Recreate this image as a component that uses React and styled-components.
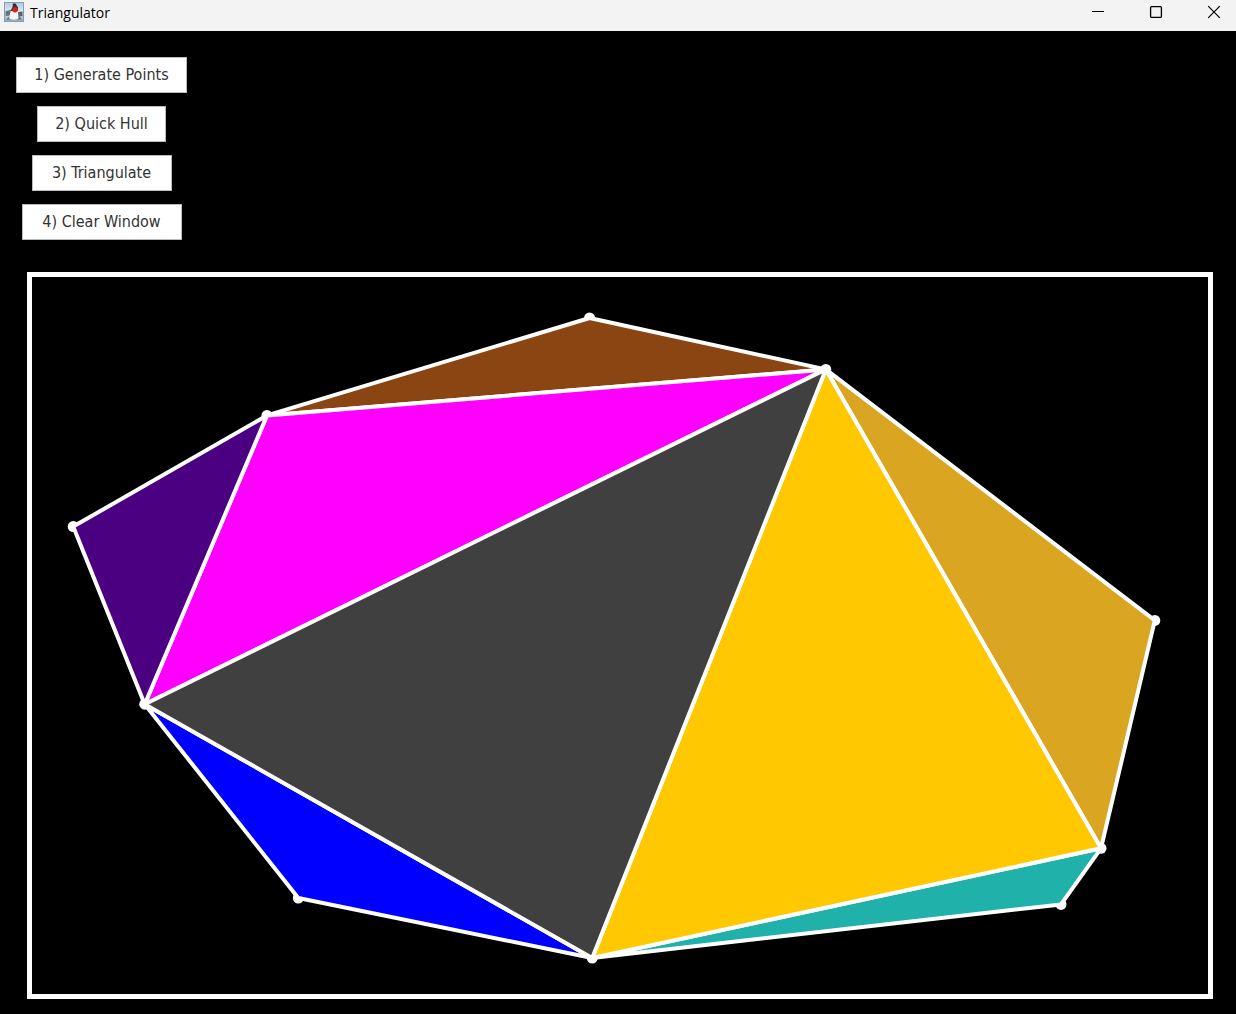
import React from "react";
import styled, { createGlobalStyle } from "styled-components";

const GlobalStyle = createGlobalStyle`
  * { box-sizing: border-box; }
  body { margin: 0; background: #000; }
`;

const AppWindow = styled.div`
  min-height: 100vh;
  display: flex;
  flex-direction: column;
  background: #000;
  font-family: "Open Sans", "Noto Sans", sans-serif;
`;

const TitleBar = styled.header`
  display: flex;
  align-items: flex-start;
  height: 31px;
  padding-left: 4px;
  background: #f3f3f3;
`;

const AppIcon = styled.svg`
  width: 20px;
  height: 20px;
  margin-top: 2px;
`;

const Title = styled.h1`
  flex: 1;
  margin: 0 0 0 6px;
  font-size: 14px;
  font-weight: 400;
  line-height: 26px;
  color: #000;
`;

const WindowControls = styled.div`
  display: flex;
  margin-right: -7px;
  overflow: hidden;
`;

const ControlButton = styled.button`
  display: flex;
  justify-content: center;
  width: 58px;
  height: 31px;
  padding: 5px 0 0;
  border: 0;
  background: transparent;
  color: #000;
`;

const ControlGlyph = styled.svg`
  width: 14px;
  height: 14px;
  fill: none;
  stroke: currentColor;
`;

const Actions = styled.nav`
  display: flex;
  flex-direction: column;
  align-items: center;
  align-self: flex-start;
  gap: 13px;
  padding: 26px 16px 0;
`;

const ActionButton = styled.button`
  height: 36px;
  width: ${(p) => p.$width}px;
  padding: 0;
  border: 1px solid #bbb;
  background: #fff;
  color: #333;
  font-family: "DejaVu Sans Condensed", "Noto Sans", sans-serif;
  font-size: 16px;
  line-height: 20px;
  white-space: nowrap;
`;

const Stage = styled.main`
  margin: 32px 23px 15px 27px;
  border: 5px solid #fff;
`;

const Drawing = styled.svg`
  display: block;
  width: 100%;
  height: auto;
`;

const actions = [
  { label: "1) Generate Points", width: 171 },
  { label: "2) Quick Hull", width: 129 },
  { label: "3) Triangulate", width: 140 },
  { label: "4) Clear Window", width: 160 },
];

const points = {
  a: [589.6, 318],
  b: [825.8, 369.4],
  c: [1154.8, 620.4],
  d: [1101, 848.3],
  e: [1061, 904.4],
  f: [592.2, 958],
  g: [298.3, 898],
  h: [144.7, 704.2],
  i: [73.2, 526.6],
  j: [267, 415.4],
};

const triangles = [
  { corners: "abj", fill: "#8b4513" },
  { corners: "jbh", fill: "#ff00ff" },
  { corners: "ijh", fill: "#4b0082" },
  { corners: "hfg", fill: "#0000ff" },
  { corners: "bcd", fill: "#daa520" },
  { corners: "def", fill: "#20b2aa" },
  { corners: "bdf", fill: "#ffc800" },
  { corners: "hbf", fill: "#404040" },
];

const toPolygon = (corners) =>
  [...corners].map((key) => points[key].join(",")).join(" ");

export default function App() {
  return (
    <AppWindow>
      <GlobalStyle />
      <TitleBar>
        <AppIcon viewBox="0 0 20 20" aria-hidden="true">
          <defs>
            <linearGradient id="tile" x1="0" y1="0" x2="0" y2="1">
              <stop offset="0" stopColor="#b4cadd" />
              <stop offset="0.5" stopColor="#dfe9f2" />
              <stop offset="1" stopColor="#8fa8bf" />
            </linearGradient>
          </defs>
          <rect x="0.5" y="0.5" width="19" height="19" fill="url(#tile)" stroke="#86a0b8" />
          <path d="M1.500 9 7 8v5.500l-5.500.5z" fill="#6b747c" />
          <path d="M14 10l4.500-.5v4.500l-4 .5z" fill="#59626a" />
          <path d="M2 17.500 6 14l4 2.500 5-2.500 3 3.500z" fill="#6a6d70" />
          <path d="M6.500 9.500 5 16.500q5 2.500 9.500 0L13.500 8z" fill="#f5f5f5" />
          <path d="M9 1.500h2.500L14 5.500 13.800 9H6.500L8.500 5z" fill="#303036" />
          <circle cx="11" cy="7.800" r="2.700" fill="#d9201c" />
        </AppIcon>
        <Title>Triangulator</Title>
        <WindowControls>
          <ControlButton type="button" aria-label="Minimize">
            <ControlGlyph viewBox="0 0 14 14">
              <path d="M1 6.500h12" />
            </ControlGlyph>
          </ControlButton>
          <ControlButton type="button" aria-label="Maximize">
            <ControlGlyph viewBox="0 0 14 14">
              <rect x="1.600" y="1.600" width="10.800" height="10.800" rx="1" strokeWidth="1.300" />
            </ControlGlyph>
          </ControlButton>
          <ControlButton type="button" aria-label="Close">
            <ControlGlyph viewBox="0 0 14 14">
              <path d="M1.200 1.200 12.800 12.800M12.800 1.200 1.200 12.800" strokeWidth="1.200" />
            </ControlGlyph>
          </ControlButton>
        </WindowControls>
      </TitleBar>

      <Actions>
        {actions.map(({ label, width }) => (
          <ActionButton key={label} type="button" $width={width}>
            {label}
          </ActionButton>
        ))}
      </Actions>

      <Stage>
        <Drawing viewBox="32 277 1176 717" role="img" aria-label="Triangulated hull">
          {Object.entries(points).map(([key, [x, y]]) => (
            <circle key={key} cx={x} cy={y} r="5.500" fill="#fff" />
          ))}
          {triangles.map(({ corners, fill }) => (
            <polygon
              key={corners}
              points={toPolygon(corners)}
              fill={fill}
              stroke="#fff"
              strokeWidth="4"
              strokeLinejoin="bevel"
            />
          ))}
        </Drawing>
      </Stage>
    </AppWindow>
  );
}
